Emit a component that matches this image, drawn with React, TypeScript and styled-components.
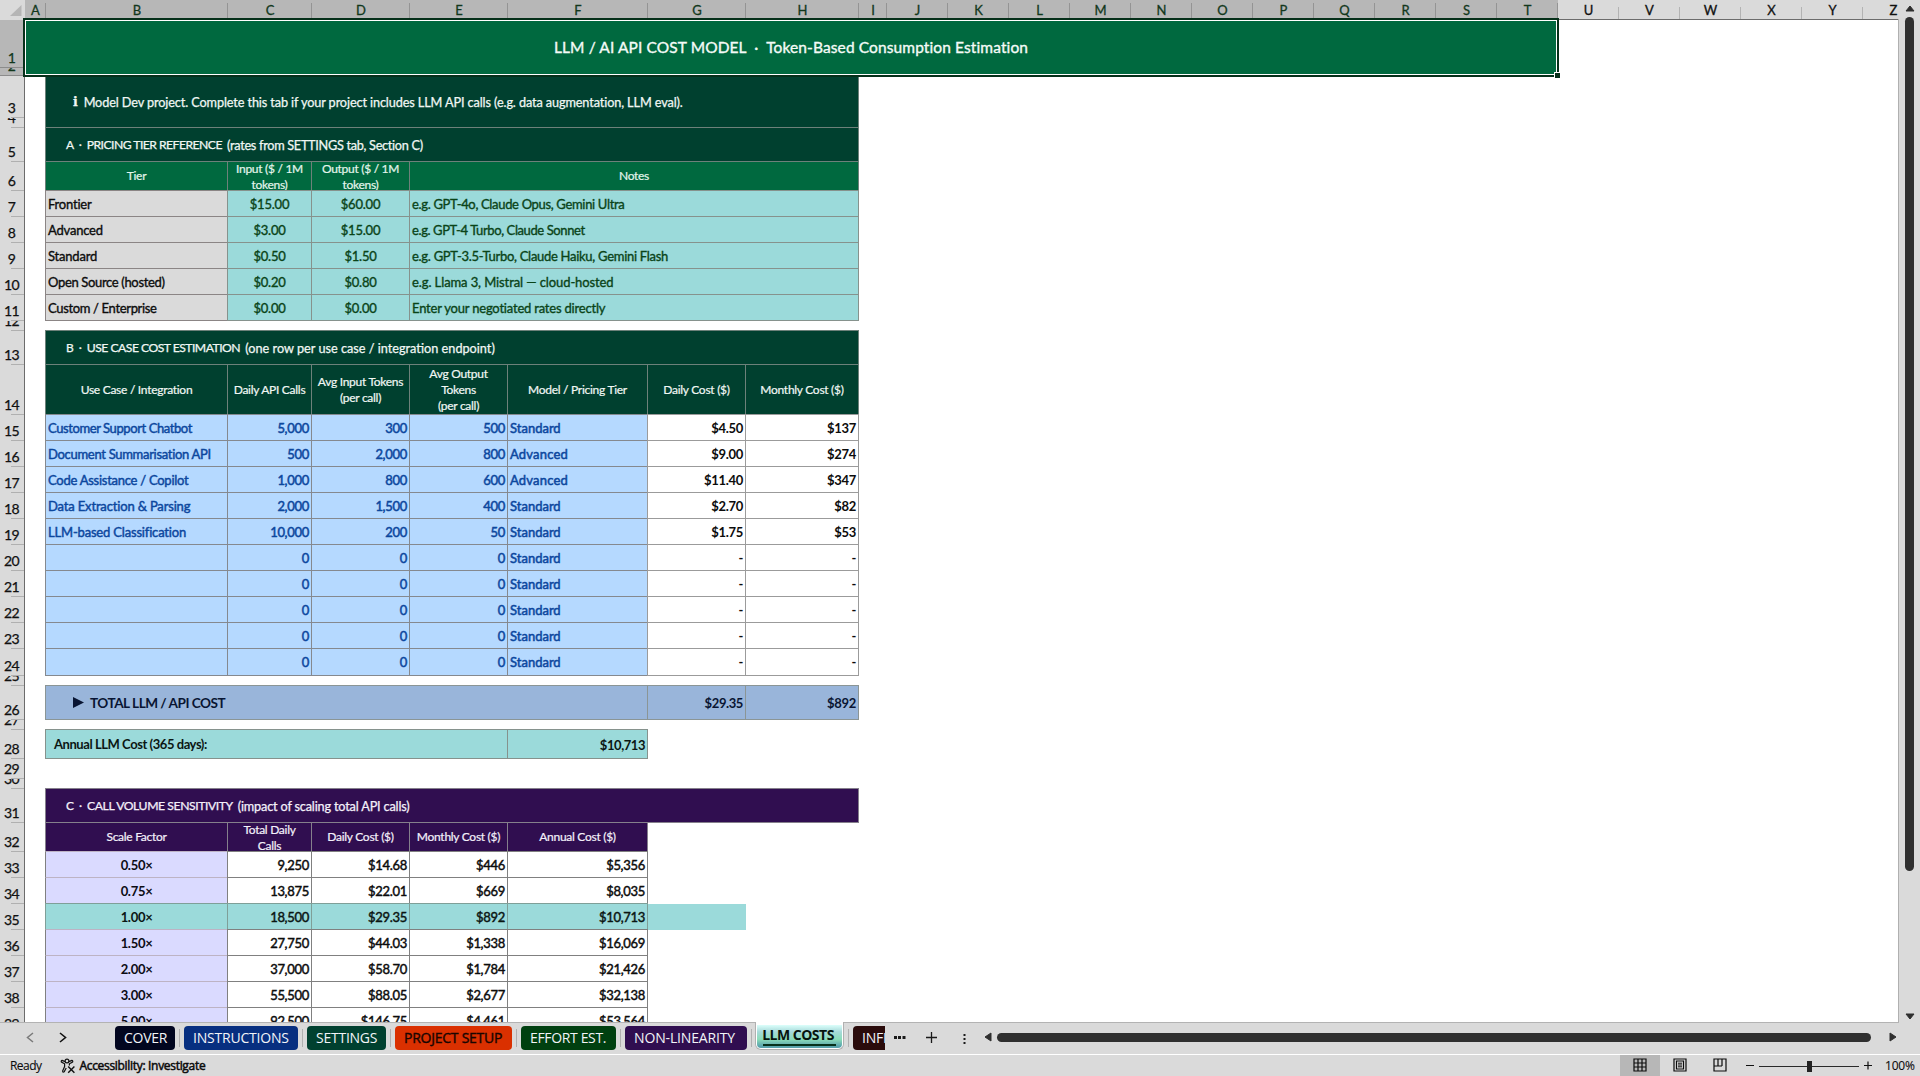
import React from "react";
import styled, { createGlobalStyle, css } from "styled-components";

const Global = createGlobalStyle`
  * { box-sizing: border-box; }
  html, body { margin: 0; padding: 0; background: #dadada; overflow: hidden; }
  body { font-family: Lato, Roboto, sans-serif; color: #0c0c0c; }
`;

const COLUMNS = "25px 21px 182px 84px 98px 98px 140px 98px 113px 28px repeat(17, 61px)";
const ROW_HEIGHTS = [
  48, 8, 42, 10, 34, 29, 26, 26, 26, 26, 26, 10, 34, 50, 26, 26, 26, 26, 26, 26, 26, 26, 26, 27, 10,
  34, 10, 29, 20, 10, 34, 29, 26, 26, 26, 26, 26, 26, 26,
];
const LETTERS = "ABCDEFGHIJKLMNOPQRSTUVWXYZ".split("");

const Window = styled.div`
  display: flex;
  flex-direction: column;
  width: 1920px;
  height: 1076px;
  background: #dadada;
`;

const Workspace = styled.div`
  display: flex;
  height: 1022px;
`;

const Viewport = styled.div`
  position: relative;
  width: 1899px;
  height: 1022px;
  overflow: hidden;
  background: #fff;
`;

const Sheet = styled.div`
  display: grid;
  grid-template-columns: ${COLUMNS};
  grid-template-rows: 20px ${ROW_HEIGHTS.map((h) => `${h}px`).join(" ")};
`;

const ViewportEdge = styled.div`
  position: absolute;
  top: 19px;
  right: 0;
  width: 1px;
  bottom: 0;
  background: #b0b0b0;
`;

const Corner = styled.div`
  grid-area: 1 / 1;
  display: flex;
  align-items: flex-start;
  padding: 5px 0 0 10px;
  background: #dadada;
`;

const ColumnHeader = styled.div<{ $selected: boolean }>`
  position: relative;
  grid-row: 1;
  display: flex;
  align-items: center;
  justify-content: center;
  padding: 1px 0 0 0;
  font-size: 13px;
  line-height: 16px;
  -webkit-text-stroke: 0.3px;
  color: ${(p) => (p.$selected ? "#12371c" : "#111")};
  background: ${(p) => (p.$selected ? "#b7b7b7" : "#dadada")};
  border-bottom: 1px solid #6c6c6c;
  &::after {
    content: "";
    position: absolute;
    right: 0;
    top: ${(p) => (p.$selected ? "3px" : "7px")};
    bottom: 0;
    width: 1px;
    background: ${(p) => (p.$selected ? "#949494" : "#b3b3b3")};
  }
`;

const RowHeader = styled.div<{ $selected: boolean }>`
  position: relative;
  grid-column: 1;
  display: flex;
  align-items: flex-end;
  justify-content: center;
  overflow: hidden;
  padding: 0 1px 0 0;
  font-size: 14px;
  line-height: 20px;
  letter-spacing: -0.6px;
  -webkit-text-stroke: 0.25px;
  color: ${(p) => (p.$selected ? "#12371c" : "#111")};
  background: ${(p) => (p.$selected ? "#b7b7b7" : "#dadada")};
  border-right: 1px solid #6c6c6c;
  &::after {
    content: "";
    position: absolute;
    left: ${(p) => (p.$selected ? "0" : "11px")};
    right: 0;
    bottom: 0;
    height: 1px;
    background: ${(p) => (p.$selected ? "#8c8c8c" : "#b0b0b0")};
  }
`;

const RowNumber = styled.span`
  display: block;
  height: 20px;
  flex: none;
`;

type Tone =
  | "forest" | "green" | "gray" | "mint" | "sky" | "white" | "steel" | "aqua"
  | "plum" | "lilac" | "plain" | "match";

const tones: Record<Tone, [string, string, string]> = {
  forest: ["#00402f", "#f1f7f4", "#6d817a"],
  green: ["#00693f", "#e4f6ec", "#6d817a"],
  gray: ["#dadada", "#0c0c0c", "#8b8585"],
  mint: ["#9bdada", "#0a4418", "#86928d"],
  sky: ["#b5d9ff", "#0c479e", "#85898f"],
  white: ["#ffffff", "#0c0c0c", "#9b9b9b"],
  steel: ["#99b5da", "#091533", "#8b9595"],
  aqua: ["#9bdada", "#0b1613", "#86928d"],
  plum: ["#300e50", "#f4f0fa", "#85808c"],
  lilac: ["#dadaff", "#0c0c14", "#bdb3c4 #808080"],
  plain: ["#ffffff", "#0c0c0c", "#808080"],
  match: ["#9bdada", "#0b1613", "#7f9f98"],
};

type CellProps = {
  $tone: Tone;
  $align?: "left" | "center" | "right";
  $size?: number;
  $tracking?: number;
  $stroke?: number;
  $indent?: number;
  $bold?: boolean;
  $lead?: number;
};

const Cell = styled.div<CellProps>`
  display: flex;
  align-items: center;
  justify-content: ${(p) =>
    p.$align === "center" ? "center" : p.$align === "right" ? "flex-end" : "flex-start"};
  margin: -1px 0 0 -1px;
  padding: ${(p) => p.$lead ?? 0}px 2px 0 ${(p) => p.$indent ?? 2}px;
  overflow: hidden;
  white-space: pre;
  text-align: ${(p) => p.$align ?? "left"};
  font-size: ${(p) => p.$size ?? 13}px;
  line-height: 16px;
  letter-spacing: ${(p) => p.$tracking ?? -0.3}px;
  font-weight: ${(p) => (p.$bold ? 700 : 400)};
  -webkit-text-stroke: ${(p) => p.$stroke ?? 0.35}px;
  ${(p) => {
    const [bg, fg, line] = tones[p.$tone];
    return css`
      background: ${bg};
      color: ${fg};
      border: 1px solid;
      border-color: ${line};
    `;
  }}
`;

const Banner = styled.div`
  grid-area: 2 / 2 / 4 / 22;
  display: flex;
  align-items: center;
  justify-content: center;
  padding: 0 1px 2px 0;
  background: #00693f;
  color: #f4fbf7;
  font-size: 15.5px;
  white-space: pre;
  letter-spacing: 0.11px;
  -webkit-text-stroke: 0.35px;
`;

const Selection = styled.div`
  position: absolute;
  left: 23px;
  top: 18px;
  width: 1536px;
  height: 59px;
  border: 2px solid #06301a;
  box-shadow: inset 0 0 0 1px #fff;
`;

const FillHandle = styled.div`
  position: absolute;
  left: 1555px;
  top: 73px;
  width: 5px;
  height: 5px;
  background: #06301a;
  box-shadow: -1px -1px 0 #fff;
`;

const MatchTail = styled.div`
  background: #9bdada;
`;

const InfoGlyph = styled.span`
  font-family: "DejaVu Serif", serif;
  font-size: 12.5px;
  font-weight: 700;
  margin-right: 6px;
`;

const Marker = styled.svg`
  flex: none;
  margin-right: 6px;
`;

const SectionLetter = styled.span`
  font-size: 12px;
  letter-spacing: -0.4px;
`;

const SectionText = styled.span<{ $tracking: number; $caps?: boolean }>`
  font-size: ${(p) => (p.$caps ? 12.2 : 12.7)}px;
  letter-spacing: ${(p) => p.$tracking}px;
`;

const ScrollColumn = styled.div`
  display: flex;
  flex-direction: column;
  align-items: center;
  width: 21px;
  padding: 5px 0 2px;
  height: 1022px;
`;

const VerticalThumb = styled.div`
  width: 9px;
  height: 854px;
  margin: 5px 0 auto;
  border-radius: 5px;
  background: #2f2f2f;
`;

const TabBar = styled.div`
  display: flex;
  align-items: flex-start;
  height: 32px;
`;

const TabLane = styled.div`
  display: flex;
  width: 885px;
  height: 32px;
  overflow: hidden;
`;

const TabStrip = styled.div<{ $width: number; $pad?: number }>`
  display: flex;
  flex: none;
  width: ${(p) => p.$width}px;
  padding: 4px 0 0 ${(p) => p.$pad ?? 0}px;
  border-top: 1px solid #b3b3b3;
  height: 31px;
  overflow: hidden;
`;

const NavArrows = styled.div`
  display: flex;
  flex: none;
  gap: 25px;
  width: 89px;
  padding: 5px 0 0 0;
`;

const Tab = styled.div<{ $bg: string; $width: number; $fg?: string; $heavy?: boolean; $tracking?: number }>`
  flex: none;
  width: ${(p) => p.$width}px;
  height: 24px;
  margin-top: -1px;
  padding-left: 9px;
  border-radius: 4px;
  background: ${(p) => p.$bg};
  color: ${(p) => p.$fg ?? "#f2f4f8"};
  font-family: "Open Sans", "Noto Sans", sans-serif;
  font-size: 14px;
  line-height: 24px;
  letter-spacing: ${(p) => p.$tracking ?? -0.25}px;
  white-space: nowrap;
  -webkit-text-stroke: ${(p) => (p.$heavy ? 0.4 : 0)}px;
`;

const Divider = styled.div`
  flex: none;
  width: 1px;
  height: 18px;
  margin: 2px 4px 0;
  background: #b0b0b0;
`;

const ActiveSlot = styled.div`
  flex: none;
  width: 89px;
  height: 28px;
  padding: 3px 1px 1px;
  background: #fff;
  border: 1px solid #b0b0b0;
  border-top: 0;
  border-radius: 0 0 6px 6px;
`;

const ActiveTab = styled.div`
  display: flex;
  flex-direction: column;
  align-items: center;
  height: 23px;
  padding: 1px 3px 0 0;
  border-radius: 0 0 4px 4px;
  background: linear-gradient(#dcfffb 0%, #a6d9d9 30%, #8cddb9 62%, #5aa3ac 92%);
  color: #06140e;
  font-family: "Open Sans", "Noto Sans", sans-serif;
  font-size: 14px;
  font-weight: 700;
  line-height: 18px;
  letter-spacing: -0.5px;
  white-space: nowrap;
  &::after {
    content: "";
    width: 73px;
    height: 2px;
    margin-left: 2px;
    background: #06301a;
  }
`;

const TabTools = styled.div`
  display: flex;
  align-items: center;
  width: 99px;
  height: 31px;
  padding: 0 0 1px 8px;
  border-top: 1px solid #b3b3b3;
`;

const ScrollRow = styled.div`
  display: flex;
  align-items: center;
  width: 915px;
  height: 31px;
  padding: 0 0 2px 0;
  border-top: 1px solid #b3b3b3;
`;

const HorizontalThumb = styled.div`
  width: 874px;
  height: 9px;
  margin: 0 18px 0 5px;
  border-radius: 5px;
  background: #2f2f2f;
`;

const StatusBar = styled.div`
  display: flex;
  align-items: stretch;
  height: 22px;
  border-top: 1px solid #fff;
  font-family: "Open Sans", "Noto Sans", sans-serif;
  font-size: 12px;
  line-height: 22px;
`;

const StatusText = styled.span<{ $heavy?: boolean; $tracking?: number }>`
  letter-spacing: ${(p) => p.$tracking ?? -0.2}px;
  -webkit-text-stroke: ${(p) => (p.$heavy ? 0.5 : 0.1)}px;
`;

const AccessibilityIcon = styled.svg`
  margin: 0 3px 0 19px;
`;

const StatusLeft = styled.div`
  display: flex;
  align-items: center;
  width: 1620px;
  padding-left: 10px;
`;

const ViewButton = styled.div<{ $active?: boolean }>`
  display: flex;
  align-items: center;
  justify-content: center;
  width: 40px;
  padding-bottom: 1px;
  background: ${(p) => (p.$active ? "#b7b7b7" : "transparent")};
`;

const ZoomControl = styled.div`
  display: flex;
  align-items: center;
  padding-left: 5px;
  gap: 12px;
`;

function Title({ row, tone, letter, name, note, nameTracking, noteTracking }: {
  row: number; tone: Tone; letter: string; name: string; note: string; nameTracking: number; noteTracking: number;
}) {
  return (
    <Cell
      $tone={tone}
      $indent={20}
      $size={12.7}
      $stroke={0.25}
      style={{ gridArea: `${row + 1} / 3 / auto / 10` }}
    >
      <SectionLetter>{`${letter}  ·  `}</SectionLetter>
      <SectionText $caps $tracking={nameTracking}>{`${name}  `}</SectionText>
      <SectionText $tracking={noteTracking}>{note}</SectionText>
    </Cell>
  );
}

type PlacedProps = CellProps & { row: number; col: number; span?: number; children?: React.ReactNode };

function At({ row, col, span = 1, children, ...rest }: PlacedProps) {
  return (
    <Cell {...rest} style={{ gridRow: row + 1, gridColumn: `${col} / span ${span}` }}>
      {children}
    </Cell>
  );
}

function Head({ row, col, span, tone, lead, children }: {
  row: number; col: number; span?: number; tone: Tone; lead?: number; children: string;
}) {
  return (
    <At row={row} col={col} span={span} $tone={tone} $align="center" $size={12} $tracking={-0.28} $stroke={0.2} $lead={lead}>
      {children}
    </At>
  );
}

const tiers = [
  ["Frontier", "$15.00", "$60.00", "e.g. GPT-4o, Claude Opus, Gemini Ultra"],
  ["Advanced", "$3.00", "$15.00", "e.g. GPT-4 Turbo, Claude Sonnet"],
  ["Standard", "$0.50", "$1.50", "e.g. GPT-3.5-Turbo, Claude Haiku, Gemini Flash"],
  ["Open Source (hosted)", "$0.20", "$0.80", "e.g. Llama 3, Mistral — cloud-hosted"],
  ["Custom / Enterprise", "$0.00", "$0.00", "Enter your negotiated rates directly"],
];

const tierNoteTracking = [-0.33, -0.4, -0.29, -0.1, -0.2];

const useCases = [
  ["Customer Support Chatbot", "5,000", "300", "500", "Standard", "$4.50", "$137"],
  ["Document Summarisation API", "500", "2,000", "800", "Advanced", "$9.00", "$274"],
  ["Code Assistance / Copilot", "1,000", "800", "600", "Advanced", "$11.40", "$347"],
  ["Data Extraction & Parsing", "2,000", "1,500", "400", "Standard", "$2.70", "$82"],
  ["LLM-based Classification", "10,000", "200", "50", "Standard", "$1.75", "$53"],
  ...Array.from({ length: 5 }, () => ["", "0", "0", "0", "Standard", "-", "-"]),
];

const useCaseTracking = [-0.41, -0.3, -0.26, -0.16, -0.18];

const scales = [
  ["0.50×", "9,250", "$14.68", "$446", "$5,356"],
  ["0.75×", "13,875", "$22.01", "$669", "$8,035"],
  ["1.00×", "18,500", "$29.35", "$892", "$10,713"],
  ["1.50×", "27,750", "$44.03", "$1,338", "$16,069"],
  ["2.00×", "37,000", "$58.70", "$1,784", "$21,426"],
  ["3.00×", "55,500", "$88.05", "$2,677", "$32,138"],
  ["5.00×", "92,500", "$146.75", "$4,461", "$53,564"],
];

function Triangle({ points, w, h }: { points: string; w: number; h: number }) {
  return (
    <svg width={w} height={h} viewBox={`0 0 ${w} ${h}`}>
      <polygon points={points} fill="#2f2f2f" stroke="#2f2f2f" strokeWidth="1" strokeLinejoin="round" />
    </svg>
  );
}

function Grid() {
  return (
    <Sheet>
      <Corner>
        <svg width="12" height="12"><polygon points="11.5,0 11.5,11 0,11" fill="#b5b5b5" /></svg>
      </Corner>
      {LETTERS.map((l, i) => (
        <ColumnHeader key={l} $selected={i < 20} style={{ gridColumn: i + 2 }}>{l}</ColumnHeader>
      ))}
      {ROW_HEIGHTS.map((_, i) => (
        <RowHeader key={i} $selected={i < 2} style={{ gridRow: i + 2 }}>
          <RowNumber>{i + 1}</RowNumber>
        </RowHeader>
      ))}
      <Banner>{"LLM / AI API COST MODEL  ·  Token-Based Consumption Estimation"}</Banner>
      <Cell $tone="forest" $indent={27} $size={12.7} $tracking={-0.11} $stroke={0.25} style={{ gridArea: "4 / 3 / 6 / 10" }}>
        <InfoGlyph>i</InfoGlyph>
        Model Dev project. Complete this tab if your project includes LLM API calls (e.g. data augmentation, LLM eval).
      </Cell>

      <Title row={5} tone="forest" letter="A" name="PRICING TIER REFERENCE" note="(rates from SETTINGS tab, Section C)"
        nameTracking={-0.54} noteTracking={-0.29} />
      <Head row={6} col={3} tone="green">Tier</Head>
      <Head row={6} col={4} tone="green" lead={2}>{"Input ($ / 1M\ntokens)"}</Head>
      <Head row={6} col={5} tone="green" lead={2}>{"Output ($ / 1M\ntokens)"}</Head>
      <Head row={6} col={6} span={4} tone="green">Notes</Head>
      {tiers.map(([name, input, output, note], i) => (
        <React.Fragment key={name}>
          <At row={7 + i} col={3} $tone="gray" $tracking={i > 2 ? -0.34 : -0.2}>{name}</At>
          <At row={7 + i} col={4} $tone="mint" $align="center" $tracking={-0.2}>{input}</At>
          <At row={7 + i} col={5} $tone="mint" $align="center" $tracking={-0.2}>{output}</At>
          <At row={7 + i} col={6} span={4} $tone="mint" $tracking={tierNoteTracking[i]}>{note}</At>
        </React.Fragment>
      ))}

      <Title row={13} tone="forest" letter="B" name="USE CASE COST ESTIMATION" note="(one row per use case / integration endpoint)"
        nameTracking={-0.52} noteTracking={0} />
      {["Use Case / Integration", "Daily API Calls", "Avg Input Tokens\n(per call)", "Avg Output\nTokens\n(per call)",
        "Model / Pricing Tier", "Daily Cost ($)", "Monthly Cost ($)"].map((t, i) => (
        <Head key={t} row={14} col={3 + i} tone="forest" lead={1}>{t}</Head>
      ))}
      {useCases.map(([name, calls, inTok, outTok, tier, daily, monthly], i) => (
        <React.Fragment key={i}>
          <At row={15 + i} col={3} $tone="sky" $stroke={0.45} $tracking={useCaseTracking[i]}>{name}</At>
          <At row={15 + i} col={4} $tone="sky" $stroke={0.5} $align="right">{calls}</At>
          <At row={15 + i} col={5} $tone="sky" $stroke={0.5} $align="right">{inTok}</At>
          <At row={15 + i} col={6} $tone="sky" $stroke={0.5} $align="right">{outTok}</At>
          <At row={15 + i} col={7} $tone="sky" $stroke={0.5} $tracking={tier === "Advanced" ? 0.2 : 0}>{tier}</At>
          <At row={15 + i} col={8} $tone="white" $align="right" $bold $stroke={0}>{daily}</At>
          <At row={15 + i} col={9} $tone="white" $align="right" $bold $stroke={0}>{monthly}</At>
        </React.Fragment>
      ))}

      <At row={26} col={3} span={5} $tone="steel" $indent={27} $size={13.6} $tracking={-0.5} $bold $stroke={0}>
        <Marker width="11" height="11"><polygon points="0,0 11,5.5 0,11" fill="#091533" /></Marker>
        TOTAL LLM / API COST
      </At>
      <At row={26} col={8} $tone="steel" $align="right" $bold $stroke={0} $tracking={-0.4}>$29.35</At>
      <At row={26} col={9} $tone="steel" $align="right" $bold $stroke={0}>$892</At>
      <At row={28} col={3} span={4} $tone="aqua" $indent={8} $bold $stroke={0} $tracking={-0.44}>Annual LLM Cost (365 days):</At>
      <At row={28} col={7} $tone="aqua" $align="right" $bold $stroke={0} $lead={1} $tracking={-0.45}>$10,713</At>

      <Title row={31} tone="plum" letter="C" name="CALL VOLUME SENSITIVITY" note="(impact of scaling total API calls)"
        nameTracking={-0.42} noteTracking={-0.17} />
      {["Scale Factor", "Total Daily\nCalls", "Daily Cost ($)", "Monthly Cost ($)", "Annual Cost ($)"].map((t, i) => (
        <Head key={t} row={32} col={3 + i} tone="plum" lead={i === 1 ? 2 : 0}>{t}</Head>
      ))}
      {scales.map(([factor, ...values], i) => (
        <React.Fragment key={factor}>
          <At row={33 + i} col={3} $tone={i === 2 ? "match" : "lilac"} $align="center" $bold $stroke={0}>{factor}</At>
          {values.map((v, j) => (
            <At key={j} row={33 + i} col={4 + j} $tone={i === 2 ? "match" : "plain"} $align="right" $stroke={0.45}>{v}</At>
          ))}
        </React.Fragment>
      ))}
      <MatchTail style={{ gridArea: "36 / 8" }} />
    </Sheet>
  );
}

const tabs = [
  { label: "COVER", bg: "#02061f", width: 60 },
  { label: "INSTRUCTIONS", bg: "#072f80", width: 114, tracking: -0.2 },
  { label: "SETTINGS", bg: "#00402f", width: 79 },
  { label: "PROJECT SETUP", bg: "#da3000", width: 117, fg: "#190500", heavy: true },
  { label: "EFFORT EST.", bg: "#004010", width: 95, tracking: -0.35 },
  { label: "NON-LINEARITY", bg: "#300e50", width: 122, tracking: -0.15 },
];

export default function App() {
  return (
    <Window>
      <Global />
      <Workspace>
        <Viewport>
          <Grid />
          <Selection />
          <FillHandle />
          <ViewportEdge />
        </Viewport>
        <ScrollColumn>
          <Triangle w={10} h={7} points="5,1 9,6 1,6" />
          <VerticalThumb />
          <Triangle w={10} h={7} points="1,1 9,1 5,6" />
        </ScrollColumn>
      </Workspace>
      <TabBar>
        <TabLane>
          <TabStrip $width={755} $pad={26}>
            <NavArrows>
              <svg width="8" height="11"><path d="M7 1 L1.5 5.5 L7 10" fill="none" stroke="#7a7a7a" strokeWidth="1.5" /></svg>
              <svg width="8" height="11"><path d="M1 1 L6.5 5.5 L1 10" fill="none" stroke="#111" strokeWidth="1.6" /></svg>
            </NavArrows>
            {tabs.map((t) => (
              <React.Fragment key={t.label}>
                <Tab $bg={t.bg} $width={t.width} $fg={t.fg} $heavy={t.heavy} $tracking={t.tracking}>{t.label}</Tab>
                <Divider />
              </React.Fragment>
            ))}
          </TabStrip>
          <ActiveSlot>
            <ActiveTab>LLM COSTS</ActiveTab>
          </ActiveSlot>
          <TabStrip $width={41}>
            <Divider />
            <Tab $bg="#2a0b0b" $width={60}>INFRA</Tab>
          </TabStrip>
        </TabLane>
        <TabTools>
          <svg width="84" height="14" viewBox="0 0 84 14">
            <g fill="#1a1a1a">
              <rect x="1" y="5" width="3" height="3" /><rect x="5" y="5" width="3" height="3" /><rect x="9.5" y="5" width="3" height="3" />
              <rect x="70.5" y="3" width="2" height="2" /><rect x="70.5" y="7" width="2" height="2" /><rect x="70.5" y="11" width="2" height="2" />
            </g>
            <path d="M33 6.5 H44 M38.5 1 V12" stroke="#1a1a1a" strokeWidth="1.3" />
          </svg>
        </TabTools>
        <ScrollRow>
          <Triangle w={8} h={10} points="7,1 7,9 1,5" />
          <HorizontalThumb />
          <Triangle w={8} h={10} points="1,1 1,9 7,5" />
        </ScrollRow>
      </TabBar>
      <StatusBar>
        <StatusLeft>
          <StatusText $tracking={-0.55}>Ready</StatusText>
          <AccessibilityIcon width="16" height="16" viewBox="0 0 16 16" fill="none" stroke="#111" strokeWidth="1.2">
            <circle cx="7" cy="3" r="1.9" />
            <path d="M5 3.6 L2.2 2.4 Q0.8 2.6 1.4 4 L4.6 5.8 V8.5 L2.6 13 Q2.8 14.8 4.2 13.8 L6.2 10 M9 3.6 L11.8 2.4 Q13.2 2.6 12.6 4 L9.4 5.8 V7.4" />
            <path d="M8.2 8.6 L14.4 14.8 M14.4 8.6 L8.2 14.8" strokeWidth="1.4" />
          </AccessibilityIcon>
          <StatusText $heavy $tracking={-0.31}>Accessibility: Investigate</StatusText>
        </StatusLeft>
        <ViewButton $active>
          <svg width="14" height="14" fill="none" stroke="#0c0c0c" strokeWidth="1.2"><path d="M1 1 H13 V13 H1 Z M1 5 H13 M1 9 H13 M5 1 V13 M9 1 V13" /></svg>
        </ViewButton>
        <ViewButton>
          <svg width="14" height="14" fill="none" stroke="#0c0c0c" strokeWidth="1.2"><path d="M1 1 H13 V13 H1 Z M3.5 3 H10.5 V11 H3.5 Z" /><path d="M5 5.2 H9 M5 7 H9 M5 8.8 H9" strokeWidth="1" /></svg>
        </ViewButton>
        <ViewButton>
          <svg width="14" height="14" fill="none" stroke="#0c0c0c" strokeWidth="1.2"><path d="M1 1 H13 V13 H1 Z M5 1 V8 M9 1 V8 M1 8 H9" /></svg>
        </ViewButton>
        <ZoomControl>
          <svg width="128" height="14" viewBox="0 0 128 14">
            <path d="M1 6.5 H9 M119 6.5 H127 M123 2.5 V10.5" stroke="#111" strokeWidth="1.2" />
            <path d="M14 7.5 H114" stroke="#2a2a2a" strokeWidth="1" />
            <rect x="62" y="2" width="5" height="11" fill="#222" />
          </svg>
          <StatusText>100%</StatusText>
        </ZoomControl>
      </StatusBar>
    </Window>
  );
}
